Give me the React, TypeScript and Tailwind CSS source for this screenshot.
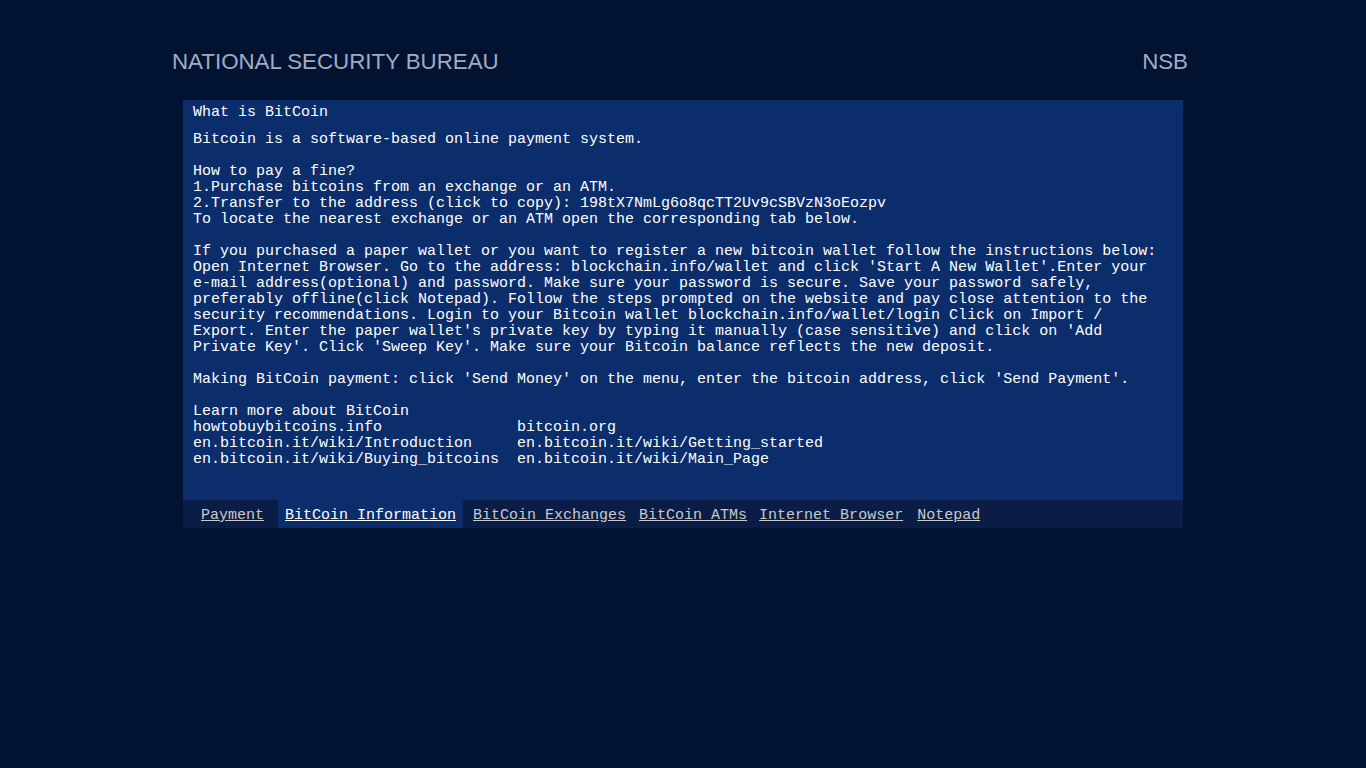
import React from "react";

const mono = { fontFamily: '"Liberation Mono", "Courier New", monospace' };

export default function App() {
  const body = [
    "Bitcoin is a software-based online payment system.",
    "",
    "How to pay a fine?",
    "1.Purchase bitcoins from an exchange or an ATM.",
    "2.Transfer to the address (click to copy): 198tX7NmLg6o8qcTT2Uv9cSBVzN3oEozpv",
    "To locate the nearest exchange or an ATM open the corresponding tab below.",
    "",
    "If you purchased a paper wallet or you want to register a new bitcoin wallet follow the instructions below:",
    "Open Internet Browser. Go to the address: blockchain.info/wallet and click 'Start A New Wallet'.Enter your",
    "e-mail address(optional) and password. Make sure your password is secure. Save your password safely,",
    "preferably offline(click Notepad). Follow the steps prompted on the website and pay close attention to the",
    "security recommendations. Login to your Bitcoin wallet blockchain.info/wallet/login Click on Import /",
    "Export. Enter the paper wallet's private key by typing it manually (case sensitive) and click on 'Add",
    "Private Key'. Click 'Sweep Key'. Make sure your Bitcoin balance reflects the new deposit.",
    "",
    "Making BitCoin payment: click 'Send Money' on the menu, enter the bitcoin address, click 'Send Payment'.",
    "",
    "Learn more about BitCoin",
  ];
  const links = [
    ["howtobuybitcoins.info", "bitcoin.org"],
    ["en.bitcoin.it/wiki/Introduction", "en.bitcoin.it/wiki/Getting_started"],
    ["en.bitcoin.it/wiki/Buying_bitcoins", "en.bitcoin.it/wiki/Main_Page"],
  ];
  const tab = "flex items-center pt-[4px] underline whitespace-pre";
  return (
    <div className="min-h-screen w-full bg-[#011331]">
      <div className="mx-auto w-[1022px] h-[75px] pt-[49px] pr-[6px] flex justify-between items-start text-[#a3abc2] text-[22.3px] leading-[26px]" style={{ fontFamily: '"Liberation Sans", Arial, sans-serif' }}>
        <span>NATIONAL SECURITY BUREAU</span>
        <span>NSB</span>
      </div>
      <div className="mx-auto w-[1000px] mt-[25px]" style={mono}>
        <div className="bg-[#0b2d6b] px-[10px] pt-[5px] pb-[32px] text-white text-[15px] leading-[16px]">
          <div className="whitespace-pre mb-[11px]">What is BitCoin</div>
          {body.map((l, i) => (
            <div key={i} className="whitespace-pre h-[16px]">{l}</div>
          ))}
          {links.map((r, i) => (
            <div key={i} className="flex whitespace-pre h-[16px]">
              <span className="w-[324px]">{r[0]}</span>
              <span>{r[1]}</span>
            </div>
          ))}
        </div>
        <div className="bg-[#0a1d47] h-[28px] flex items-stretch text-[15px] leading-[16px] text-[#c9c9c9]">
          <span className={"ml-[18px] " + tab}>Payment</span>
          <span className={"ml-[14px] px-[7px] bg-[#0b2d6b] text-white " + tab}>BitCoin Information</span>
          <span className={"ml-[10px] " + tab}>BitCoin Exchanges</span>
          <span className={"ml-[13px] " + tab}>BitCoin ATMs</span>
          <span className={"ml-[12px] " + tab}>Internet Browser</span>
          <span className={"ml-[14px] " + tab}>Notepad</span>
        </div>
      </div>
    </div>
  );
}
